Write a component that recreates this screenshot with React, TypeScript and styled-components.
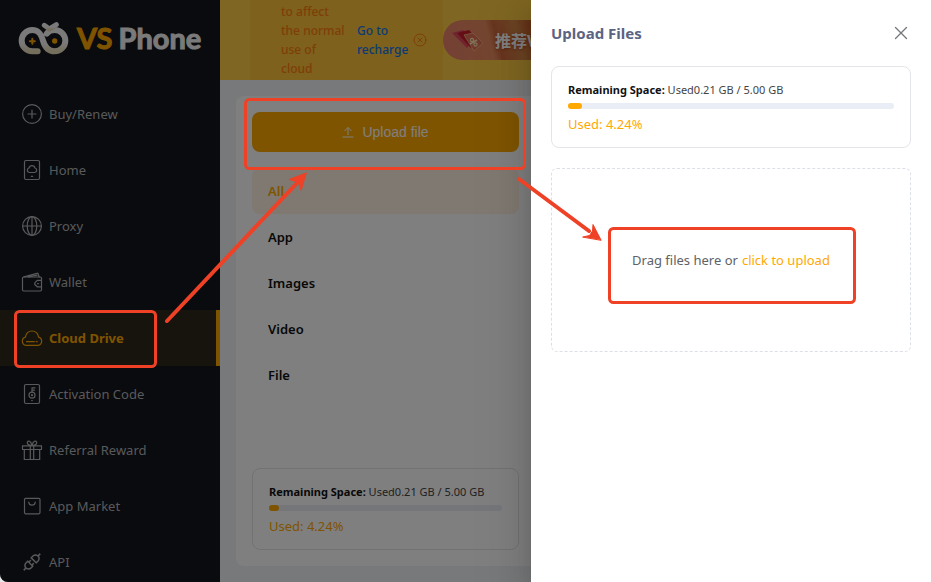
import React from "react";
import styled, { createGlobalStyle } from "styled-components";
import { AiOutlineApi } from "react-icons/ai";

const GlobalStyle = createGlobalStyle`
  * { box-sizing: border-box; }
  body {
    margin: 0;
    background: #e8e8e8;
    font-family: "Noto Sans", "Open Sans", sans-serif;
    font-size: 13px;
    color: #111;
  }
  button { font: inherit; color: inherit; border: 0; background: none; cursor: pointer; }
  p, h2 { margin: 0; }
`;

const accent = "#ffa800";
const mark = "#ee4126";

const Shell = styled.div`
  position: relative;
  display: flex;
  height: 100vh;
  overflow: hidden;
  background: #f0f2f5;
  border-bottom-left-radius: 8px;
`;

const Sidebar = styled.aside`
  flex: 0 0 220px;
  background: #14161c;
`;

const Brand = styled.div`
  display: flex;
  align-items: center;
  height: 86px;
  padding: 0 0 10px 17px;
  font-family: Lato, sans-serif;
  font-size: 29px;
  font-weight: 700;
  line-height: 40px;
  color: #f4f4f4;
  -webkit-text-stroke: 1px currentColor;
`;

const BrandAccent = styled.span`
  margin: 0 6px 0 7px;
  color: ${accent};
`;

const NavItem = styled.a<{ $active?: boolean }>`
  display: flex;
  align-items: center;
  gap: 6px;
  height: 56px;
  padding-left: 21px;
  border-right: 4px solid ${(p) => (p.$active ? accent : "transparent")};
  background: ${(p) => (p.$active ? "#2e281b" : "transparent")};
  color: ${(p) => (p.$active ? accent : "#b2b3b6")};
  font-weight: ${(p) => (p.$active ? 700 : 400)};
  text-decoration: none;
  svg { flex: none; }
`;

const Main = styled.main`
  flex: 1;
  min-width: 0;
  display: flex;
  flex-direction: column;
`;

const Banner = styled.header`
  display: flex;
  align-items: center;
  height: 80px;
  padding-left: 30px;
  background: #fecd44;
  overflow: hidden;
`;

const Notice = styled.div`
  display: flex;
  align-items: center;
  flex: 0 0 193px;
  height: 80px;
  padding-left: 31px;
  background: #fac238;
  color: #ff7d10;
  font-size: 12px;
  font-weight: 500;
  line-height: 19px;
`;

const NoticeText = styled.p`
  width: 76px;
`;

const NoticeLink = styled.a`
  width: 56px;
  color: #1673e6;
  text-decoration: none;
`;

const NoticeClose = styled.button`
  display: flex;
  padding: 0;
`;

const Promo = styled.div`
  flex: 1;
  display: flex;
  align-items: center;
  height: 40px;
  gap: 10px;
  padding-left: 8px;
  border-radius: 20px 0 0 20px;
  background: linear-gradient(75deg, #e8806a 0, #e88c60 50px, #d06a3c 58px, #d88848 78px, #c4541c 100px);
  color: #fff;
  font-family: "Noto Sans CJK SC", sans-serif;
  font-size: 16px;
  font-weight: 700;
  white-space: nowrap;
  text-shadow: 0 1px 3px #b04020;
`;

const Workspace = styled.section`
  flex: 1;
  display: flex;
  margin: 16px;
  padding: 16px;
  border-radius: 8px;
  background: #fff;
`;

const Folders = styled.div`
  flex: 0 0 267px;
  display: flex;
  flex-direction: column;
`;

const UploadButton = styled.button`
  display: flex;
  align-items: center;
  justify-content: center;
  gap: 8px;
  height: 40px;
  margin-bottom: 16px;
  border-radius: 8px;
  background: ${accent};
  color: #fff;
  font-family: "Liberation Sans", sans-serif;
  font-size: 14px;
`;

const FolderList = styled.nav`
  flex: 1;
  display: flex;
  flex-direction: column;
`;

const Folder = styled.button<{ $active?: boolean }>`
  height: 46px;
  padding: 0 16px;
  border-radius: 8px;
  background: ${(p) => (p.$active ? "#fff2e2" : "transparent")};
  color: ${(p) => (p.$active ? accent : "#111")};
  font-weight: 600;
  text-align: left;
`;

const Card = styled.div`
  padding: 16px;
  border: 1px solid #e4e5e9;
  border-radius: 8px;
`;

const SpaceLine = styled.p`
  font-size: 11px;
  line-height: 14px;
  color: #444;
  b { color: #111; }
`;

const Track = styled.div`
  height: 6px;
  margin: 6px 0 8px;
  border-radius: 3px;
  background: #e9edf5;
`;

const Fill = styled.div`
  height: 6px;
  border-radius: 3px;
  background: ${accent};
`;

const UsedLine = styled.p`
  line-height: 14px;
  color: ${accent};
`;

const Mask = styled.div`
  position: absolute;
  inset: 0;
  background: rgba(0, 0, 0, 0.5);
`;

const Drawer = styled.section`
  position: absolute;
  top: 0;
  right: 0;
  bottom: 0;
  width: 400px;
  padding: 20px;
  background: #fff;
  box-shadow: 0 16px 48px 16px rgba(0, 0, 0, 0.08), 0 12px 32px rgba(0, 0, 0, 0.12),
    0 8px 16px -8px rgba(0, 0, 0, 0.16);
`;

const DrawerHeader = styled.header`
  display: flex;
  align-items: center;
  justify-content: space-between;
  height: 26px;
  margin-bottom: 20px;
`;

const Title = styled.h2`
  font-size: 15px;
  line-height: 26px;
  font-weight: 700;
  color: #5b6482;
`;

const CloseButton = styled.button`
  display: flex;
  padding: 0;
  color: #73767a;
`;

const DropZone = styled.div`
  display: flex;
  align-items: center;
  justify-content: center;
  gap: 4px;
  height: 184px;
  margin-top: 20px;
  border: 1px dashed #dcdfe6;
  border-radius: 6px;
  color: #606266;
`;

const PickButton = styled.button`
  padding: 0;
  color: ${accent};
`;

const Marks = styled.svg`
  position: absolute;
  top: 0;
  left: 0;
  pointer-events: none;
`;

function Icon({ children }: { children: React.ReactNode }) {
  return (
    <svg width="22" height="22" viewBox="0 0 22 22" fill="none" stroke="currentColor" strokeWidth="1.2" strokeLinecap="round" strokeLinejoin="round" aria-hidden="true">
      {children}
    </svg>
  );
}

const items = [
  { label: "Buy/Renew", icon: <Icon><circle cx="11" cy="11" r="9.4" /><path d="M11 7v8M7 11h8" /></Icon> },
  {
    label: "Home",
    icon: (
      <Icon>
        <rect x="3.5" y="1.5" width="15" height="19" rx="1.5" />
        <path d="M8.3 13.5a2.3 2.3 0 0 1-.3-4.5 3.1 3.1 0 0 1 6 0 2.3 2.3 0 0 1-.3 4.5zM10.3 17.3h1.4" />
      </Icon>
    ),
  },
  { label: "Proxy", icon: <Icon><circle cx="11" cy="11" r="9.4" /><ellipse cx="11" cy="11" rx="4.8" ry="9.4" /><path d="M11 1.6v18.8M1.6 11h18.8" /></Icon> },
  {
    label: "Wallet",
    icon: (
      <Icon>
        <rect x="1.5" y="6" width="19" height="14" rx="1.2" />
        <path d="M3 5.8 15.8 2.3q1-.3 1.4.7l1 3M7.5 5.8l8.6-1.6M20.3 9.4h-4.1l-2.4 2.4v1.7l2.4 2.3h4.1M16.6 12.7h.8" />
      </Icon>
    ),
  },
  {
    label: "Cloud Drive",
    active: true,
    icon: <Icon><path d="M5 18.3a4.2 4.2 0 0 1-.6-8.2C5 6.500 7.500 4 11 4s6 2.500 6.600 6.100a4.200 4.200 0 0 1-.6 8.200zM5.500 14.700h7.800M15.200 14.700h1" /></Icon>,
  },
  {
    label: "Activation Code",
    icon: (
      <Icon>
        <rect x="3.5" y="1.5" width="15" height="19" rx="1.5" />
        <circle cx="11" cy="12.2" r="3" />
        <circle cx="11" cy="12.2" r="0.5" />
        <path d="M11 9.200V4.800h3M11 7.200h2.500M10.700 17.600h.6" />
      </Icon>
    ),
  },
  {
    label: "Referral Reward",
    icon: (
      <Icon>
        <path d="M1.500 6.800h19v3.700h-19zM3.300 10.500h15.400v10H3.300zM9.300 6.800v13.700M12.700 6.800v13.700M10.500 6.500C7.500 6.500 5.500 4.500 6.500 2.800S10.500 2.500 10.800 6.500M11.500 6.500c3 0 5-2 4-3.700s-4-.3-4.300 3.700" />
      </Icon>
    ),
  },
  { label: "App Market", icon: <Icon><rect x="3.500" y="3.300" width="15.500" height="15.500" rx="1.200" /><path d="M7.800 7.200c.2 4 6.200 4 6.400 0" /></Icon> },
  { label: "API", icon: <AiOutlineApi size={22} aria-hidden="true" /> },
];

function SpaceCard() {
  const percent = 4.24;
  return (
    <Card>
      <SpaceLine><b>Remaining Space:</b> Used0.21 GB / 5.00 GB</SpaceLine>
      <Track role="progressbar" aria-label="Used space" aria-valuenow={percent} aria-valuemin={0} aria-valuemax={100}>
        <Fill style={{ width: `${percent}%` }} />
      </Track>
      <UsedLine>Used: {percent}%</UsedLine>
    </Card>
  );
}

export default function App() {
  return (
    <>
      <GlobalStyle />
      <Shell>
        <Sidebar>
          <Brand>
            <svg width="53" height="37" viewBox="50 50 159 111" fill="none" strokeLinecap="round" strokeLinejoin="round" aria-hidden="true">
              <defs>
                <linearGradient id="ring" x1="0" y1="0" x2="0" y2="1">
                  <stop offset="0.6" stopColor="#f4f4f4" />
                  <stop offset="1" stopColor="#e8ddb8" />
                </linearGradient>
              </defs>
              <g stroke="url(#ring)" strokeWidth="18">
                <path d="M112 144H96a32 32 0 0 1 0-64c20 0 27 14 32 32s15 32 35 32a32 32 0 0 0 0-64c-11 0-19 4-24 11" />
                <path d="M132 66l15 11 21-13" strokeWidth="15" />
              </g>
              <path d="M96 106v15M88.500 113.500h15" stroke={accent} strokeWidth="6" />
              <circle cx="163" cy="113" r="8" fill={accent} />
            </svg>
            <BrandAccent>VS</BrandAccent>Phone
          </Brand>
          <nav aria-label="Main">
            {items.map((item) => (
              <NavItem key={item.label} href="#" $active={item.active}>
                {item.icon}
                {item.label}
              </NavItem>
            ))}
          </nav>
        </Sidebar>
        <Main>
          <Banner>
            <Notice>
              <NoticeText>to affect<br />the normal<br />use of<br />cloud</NoticeText>
              <NoticeLink href="#">Go to recharge</NoticeLink>
              <NoticeClose aria-label="Dismiss notice">
                <svg width="14" height="14" viewBox="0 0 14 14" fill="none" stroke="currentColor" strokeLinecap="round" aria-hidden="true">
                  <circle cx="7" cy="7" r="6" />
                  <path d="M5 5l4 4M9 5L5 9" />
                </svg>
              </NoticeClose>
            </Notice>
            <Promo>
              <svg width="34" height="26" viewBox="0 0 34 26" fill="none" aria-hidden="true">
                <path d="M1 6l11-3 11 10-7 8z" fill="#e0485a" />
                <path d="M6 6l12-3 9 10-7 8z" fill="#c81c2c" />
                <path d="M13 8l9-2 10 10-9 8z" fill="#e07058" stroke="#f8b880" strokeWidth="0.8" />
                <path d="M19 17l7-4" stroke="#ffe8b0" strokeWidth="1.500" />
                <circle cx="21" cy="13" r="1.600" stroke="#ffe8b0" strokeWidth="1.200" />
                <circle cx="24.500" cy="17.500" r="1.600" stroke="#ffe8b0" strokeWidth="1.200" />
              </svg>
              推荐V
            </Promo>
          </Banner>
          <Workspace>
            <Folders>
              <UploadButton>
                <svg width="12" height="12" viewBox="0 0 12 12" fill="none" stroke="currentColor" aria-hidden="true">
                  <path d="M6 9V1.500M2.500 5L6 1.500 9.500 5M0.500 11h11" />
                </svg>
                Upload file
              </UploadButton>
              <FolderList aria-label="File types">
                {["All", "App", "Images", "Video", "File"].map((name) => (
                  <Folder key={name} $active={name === "All"}>{name}</Folder>
                ))}
              </FolderList>
              <SpaceCard />
            </Folders>
          </Workspace>
        </Main>
        <Mask />
        <Drawer role="dialog" aria-labelledby="drawer-title">
          <DrawerHeader>
            <Title id="drawer-title">Upload Files</Title>
            <CloseButton aria-label="Close">
              <svg width="20" height="20" viewBox="0 0 20 20" fill="none" stroke="currentColor" strokeWidth="1.300" strokeLinecap="round" aria-hidden="true">
                <path d="M4.500 4.500l11 11M15.500 4.500l-11 11" />
              </svg>
            </CloseButton>
          </DrawerHeader>
          <SpaceCard />
          <DropZone>
            Drag files here or <PickButton>click to upload</PickButton>
          </DropZone>
        </Drawer>
        <Marks width="931" height="582" viewBox="0 0 931 582" fill="none" stroke={mark} strokeWidth="3" strokeLinecap="round" aria-hidden="true">
          <rect x="15.500" y="311.500" width="140" height="55" rx="4" />
          <rect x="245.500" y="99.500" width="279" height="69" rx="4" />
          <rect x="609.500" y="228.500" width="245" height="74" rx="4" />
          <path d="M167 321L297 183M519 179L589 231" strokeWidth="4" />
          <path d="M306 173L289 179.500 296 181.500 299 184 301 190zM601 240L593 224.500 592.500 231 589.500 235.500 583 237z" fill={mark} strokeWidth="1" />
        </Marks>
      </Shell>
    </>
  );
}
